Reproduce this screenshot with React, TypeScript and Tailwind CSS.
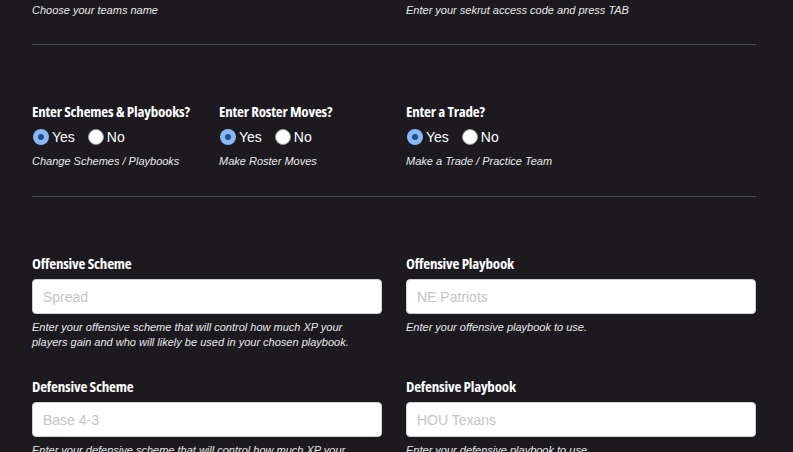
import { useState } from "react"

const head = "font-['Open_Sans',sans-serif] font-bold font-stretch-condensed text-[15px] leading-[18px] tracking-[-0.2px] text-white"
const help = "font-['Liberation_Sans',Arial,sans-serif] italic text-[11px] leading-[15px] text-[#e8e8e8]"

function Radio({ checked, label, onClick }: { checked: boolean; label: string; onClick: () => void }) {
  return (
    <label onClick={onClick} className="flex cursor-pointer items-center gap-[3px]">
      {checked ? (
        <span className="flex h-4 w-4 items-center justify-center rounded-full bg-[#8ab8f5]">
          <span className="h-[6px] w-[6px] rounded-full bg-[#1f4f8f]" />
        </span>
      ) : (
        <span className="h-4 w-4 rounded-full border border-[#9a9a9a] bg-white" />
      )}
      <span className="font-['Liberation_Sans',Arial,sans-serif] text-[14px] leading-4 text-white">{label}</span>
    </label>
  )
}

function YesNo({ title, note }: { title: string; note: string }) {
  const [value, setValue] = useState("yes")
  return (
    <div>
      <h3 className={`${head} whitespace-nowrap`}>{title}</h3>
      <div className="mt-[9px] flex items-center gap-[13px] pl-px">
        <Radio checked={value === "yes"} label="Yes" onClick={() => setValue("yes")} />
        <Radio checked={value === "no"} label="No" onClick={() => setValue("no")} />
      </div>
      <p className={`${help} mt-[9px]`}>{note}</p>
    </div>
  )
}

function Field({ label, placeholder, note }: { label: string; placeholder: string; note: string }) {
  return (
    <div className="col-span-2">
      <h3 className={head}>{label}</h3>
      <input
        placeholder={placeholder}
        className="mt-[7px] block h-[35px] w-full rounded-[4px] border border-[#d0d0d0] bg-white px-[10px] font-['Liberation_Sans',Arial,sans-serif] text-[14px] text-black outline-none placeholder:text-[#c4c4c4]"
      />
      <p className={`${help} mt-[6px] pr-4`}>{note}</p>
    </div>
  )
}

export default function App() {
  return (
    <div className="min-h-[452px] bg-[#1c1a1f] pl-8 pr-[37px]">
      <div className="grid grid-cols-4 gap-x-6 pt-[3px]">
        <p className={`${help} col-span-2`}>Choose your teams name</p>
        <p className={`${help} col-span-2`}>Enter your sekrut access code and press TAB</p>
      </div>

      <hr className="mt-[26px] border-0 border-t border-[#4a4850]" />

      <div className="mt-[57px] grid grid-cols-4 gap-x-6">
        <YesNo title="Enter Schemes & Playbooks?" note="Change Schemes / Playbooks" />
        <YesNo title="Enter Roster Moves?" note="Make Roster Moves" />
        <YesNo title="Enter a Trade?" note="Make a Trade / Practice Team" />
      </div>

      <hr className="mt-[27px] border-0 border-t border-[#4a4850]" />

      <div className="mt-[57px] grid grid-cols-4 gap-x-6 gap-y-[27px]">
        <Field
          label="Offensive Scheme"
          placeholder="Spread"
          note="Enter your offensive scheme that will control how much XP your players gain and who will likely be used in your chosen playbook."
        />
        <Field label="Offensive Playbook" placeholder="NE Patriots" note="Enter your offensive playbook to use." />
        <Field
          label="Defensive Scheme"
          placeholder="Base 4-3"
          note="Enter your defensive scheme that will control how much XP your players gain and who will likely be used in your chosen playbook."
        />
        <Field label="Defensive Playbook" placeholder="HOU Texans" note="Enter your defensive playbook to use." />
      </div>
    </div>
  )
}
